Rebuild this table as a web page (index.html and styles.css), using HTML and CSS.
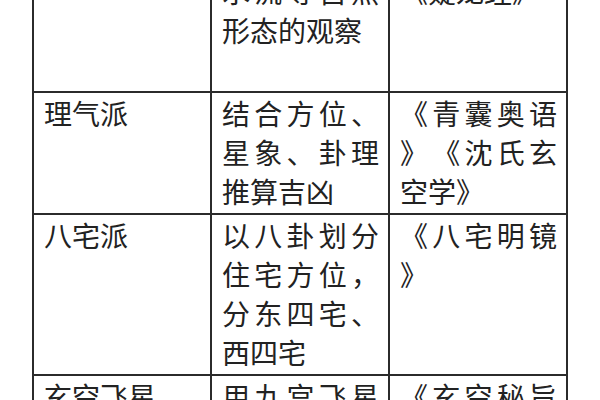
FILE: index.html
```html
<!DOCTYPE html>
<html lang="zh-CN">
<head>
<meta charset="utf-8">
<link rel="stylesheet" href="styles.css">
</head>
<body>
<table class="schools">
  <tr class="tall">
    <td>峦头派</td>
    <td>注重山川、水流等自然形态的观察</td>
    <td>《撼龙经》《疑龙经》</td>
  </tr>
  <tr>
    <td>理气派</td>
    <td>结合方位、星象、卦理推算吉凶</td>
    <td>《青囊奥语》《沈氏玄空学》</td>
  </tr>
  <tr>
    <td>八宅派</td>
    <td>以八卦划分住宅方位，分东四宅、西四宅</td>
    <td>《八宅明镜》</td>
  </tr>
  <tr>
    <td>玄空飞星</td>
    <td>用九宫飞星推算时运变化</td>
    <td>《玄空秘旨》《飞星赋》</td>
  </tr>
</table>
</body>
</html>
```

FILE: styles.css
```css
html, body {
  margin: 0;
  padding: 0;
  background: #ffffff;
  overflow: hidden;
  height: 400px;
}

.schools {
  width: 536px;
  margin: -70px auto 0;
  border-collapse: collapse;
  table-layout: fixed;
  font-family: "Noto Sans CJK SC", "Noto Sans", sans-serif;
  font-size: 28px;
  line-height: 39px;
  color: #222222;
}

.schools td {
  border: 2px solid #2b2b2b;
  padding: 1px 9px 2px 10px;
  vertical-align: top;
  text-align: justify;
  line-break: anywhere;
  text-spacing-trim: space-all;
}

.tall td {
  height: 156px;
}
```
